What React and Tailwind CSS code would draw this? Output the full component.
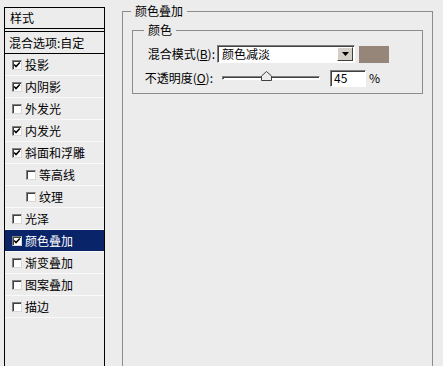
const styles = [
  { label: "投影", checked: true },
  { label: "内阴影", checked: true },
  { label: "外发光", checked: false },
  { label: "内发光", checked: true },
  { label: "斜面和浮雕", checked: true },
  { label: "等高线", checked: false, indent: true },
  { label: "纹理", checked: false, indent: true },
  { label: "光泽", checked: false },
  { label: "颜色叠加", checked: true, selected: true },
  { label: "渐变叠加", checked: false },
  { label: "图案叠加", checked: false },
  { label: "描边", checked: false },
];

const CheckBox = ({ checked }) => (
  <div className="w-[10px] h-[10px] shrink-0 bg-white border border-t-[#808080] border-l-[#808080] border-b-[#d8d8d8] border-r-[#d8d8d8] shadow-[inset_1px_1px_0_#404040] flex items-center justify-center">
    {checked && (
      <svg width="8" height="8" viewBox="0 0 8 8">
        <polyline
          points="1.2,3.6 3,5.6 6.8,1.6"
          fill="none"
          stroke="#000"
          strokeWidth="1.5"
        />
      </svg>
    )}
  </div>
);

const StyleRow = ({ label, checked, indent, selected }) => (
  <div
    className={`flex items-center h-[22px] border-b border-[#f9f9f9] ${
      selected ? "bg-[#0a246a] text-white" : "text-black"
    } ${indent ? "pl-[21px]" : "pl-[7px]"}`}
  >
    <CheckBox checked={checked} />
    <span className="ml-[3px]">{label}</span>
  </div>
);

const sunken =
  "border border-t-[#808080] border-l-[#808080] border-b-white border-r-white shadow-[inset_1px_1px_0_#404040]";

export default function App() {
  return (
    <div className="w-[443px] h-[366px] overflow-hidden bg-[#ececec] flex items-start text-[12px] leading-none text-black font-['Noto_Sans_CJK_SC','Noto_Sans',sans-serif]">
      {/* style list */}
      <div className="ml-[4px] mt-[7px] w-[101px] h-[420px] border border-black">
        <div className="h-[20px] flex items-center pl-[5px]">样式</div>
        <div className="h-[4px] border-y border-black"></div>
        <div className="h-[22px] flex items-center pl-[4px] border-b border-black">
          混合选项:自定
        </div>
        {styles.map((s) => (
          <StyleRow key={s.label} {...s} />
        ))}
      </div>

      {/* colour overlay panel */}
      <fieldset className="ml-[17px] mt-[3px] w-[311px] h-[420px] border border-[#8c8c8c]">
        <legend className="ml-[8px] px-[4px] leading-[16px]">颜色叠加</legend>
        <fieldset className="mx-[9px] mt-[3px] pb-[6px] border border-[#8c8c8c]">
          <legend className="ml-[11px] px-[4px] leading-[16px]">颜色</legend>

          <div className="mt-[7px] flex items-center h-[18px]">
            <div className="w-[82px] text-right">
              混合模式(<span className="underline">B</span>):
            </div>
            <div className={`ml-[2px] w-[138px] h-[18px] bg-white flex items-center ${sunken}`}>
              <span className="flex-1 pl-[4px]">颜色减淡</span>
              <div className="w-[16px] h-[14px] mr-[1px] bg-[#d4d0c8] border border-t-white border-l-white border-b-[#404040] border-r-[#404040] flex items-center justify-center">
                <svg width="7" height="4" viewBox="0 0 7 4">
                  <polygon points="0,0 7,0 3.5,4" fill="#000" />
                </svg>
              </div>
            </div>
            <div className="ml-[4px] w-[30px] h-[17px] bg-[#968579]"></div>
          </div>

          <div className="mt-[6px] flex items-center h-[18px]">
            <div className="w-[80px] text-right">
              不透明度(<span className="underline">O</span>):
            </div>
            <div className="relative ml-[9px] w-[98px] h-[18px] flex items-center">
              <div className={`w-full h-[4px] bg-white ${sunken}`}></div>
              <svg
                className="absolute left-[39px] top-[2px]"
                width="11"
                height="10"
                viewBox="0 0 11 10"
              >
                <polygon
                  points="5.5,0.5 10.5,5 10.5,9.5 0.5,9.5 0.5,5"
                  fill="#ececec"
                  stroke="#404040"
                  strokeWidth="1"
                />
              </svg>
            </div>
            <div className={`ml-[10px] w-[36px] h-[17px] bg-white flex items-center pl-[3px] ${sunken}`}>
              45
            </div>
            <span className="ml-[3px]">%</span>
          </div>
        </fieldset>
      </fieldset>
    </div>
  );
}
